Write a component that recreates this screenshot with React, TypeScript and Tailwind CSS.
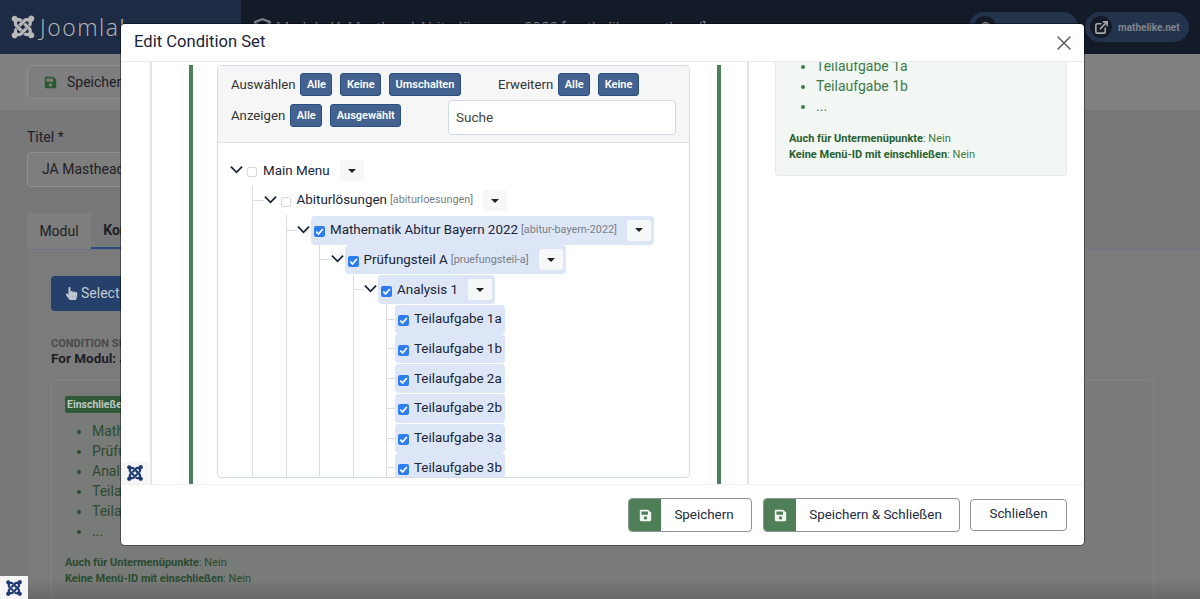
import type { ReactNode } from 'react'
import { FaJoomla, FaSave, FaHandPointer, FaShieldAlt, FaCube } from 'react-icons/fa'
import { LuX, LuExternalLink } from 'react-icons/lu'

function ChevronDown() {
  return (
    <svg viewBox="0 0 14 9" className="w-[13px] h-[9px] shrink-0" fill="none" stroke="#1a2438" strokeWidth="2">
      <path d="M1 1.5 L7 7.5 L13 1.5" />
    </svg>
  )
}

function Caret() {
  return <span className="w-0 h-0 border-x-[4.5px] border-x-transparent border-t-[4.5px] border-t-[#222]" />
}

function Check({ on }: { on: boolean }) {
  if (!on) {
    return <span className="w-[10px] h-[10px] mt-[3px] shrink-0 rounded-[2px] border border-[#d5d8dc] bg-white" />
  }
  return (
    <span className="flex items-center justify-center w-[11px] h-[11px] mt-[3px] -mr-px shrink-0 rounded-[2px] bg-[#2d7cf0]">
      <svg viewBox="0 0 11 11" className="w-[11px] h-[11px]" fill="none" stroke="#fff" strokeWidth="1.8">
        <path d="M2.3 5.6 L4.6 8 L8.8 3" />
      </svg>
    </span>
  )
}

function SmallBtn({ label, className }: { label: string; className?: string }) {
  return (
    <button className={`h-[23px] px-[5.5px] rounded-[3px] border border-[#2a5082] bg-[#436290] text-white text-[11px] font-semibold leading-none ${className ?? ''}`}>
      {label}
    </button>
  )
}

interface RowProps {
  label: string
  alias?: string
  checked?: boolean
  depth: number
  hasCaret?: boolean
  leaf?: boolean
}

function TreeRow({ label, alias, checked = false, depth, hasCaret = true, leaf = false }: RowProps) {
  return (
    <div className="flex items-center h-[29.7px]">
      {depth > 0 && <span className={`h-px bg-[#ddd] shrink-0 ${leaf ? 'w-[8px]' : 'w-[10.5px]'}`} />}
      {!leaf && <span className="flex w-[14px] shrink-0 pb-[2px]"><ChevronDown /></span>}
      <div
        className={`flex items-center h-[29px] rounded-[4px] pl-[3px] pr-[3px] ${
          checked ? 'bg-[#dce6f7]' : ''
        }`}
      >
        <Check on={checked} />
        <span className="ml-[6px] text-[13.4px] text-[#1a2438] whitespace-nowrap">{label}</span>
        {alias && <span className="ml-[3px] text-[10.8px] text-[#7a7f85] whitespace-nowrap">[{alias}]</span>}
        {hasCaret && (
          <span className="flex items-center justify-center w-[24px] h-[21px] ml-[10px] rounded-[3px] bg-[#f6f7f8]">
            <Caret />
          </span>
        )}
      </div>
    </div>
  )
}

function Branch({ children, ml }: { children: ReactNode; ml: string }) {
  return <div className={`border-l border-[#ddd] ${ml}`}>{children}</div>
}

function GreenButton({ label, w }: { label: string; w: string }) {
  return (
    <button className={`flex items-stretch h-[34px] ${w} rounded-[4px] border border-[#8d9298] bg-white overflow-hidden`}>
      <span className="flex items-center justify-center w-[32px] shrink-0 bg-[#4f7f56] text-[#f2f5f2] text-[13px]">
        <FaSave />
      </span>
      <span className="flex-1 flex items-center justify-center pr-[4px] text-[13.4px] text-[#1f2a3c]">{label}</span>
    </button>
  )
}

// the page behind the dialog, already in its dimmed colours
function BackgroundPage() {
  return (
    <div className="h-[599px] overflow-hidden bg-[#77787a] text-[#1d2026]">
      <header className="flex h-[54px] bg-[#131a28]">
        <div className="flex items-center w-[241px] pl-[10px] gap-[4px] bg-[#1d2b45] text-[#b8b8b8]">
          <FaJoomla className="text-[26px]" />
          <span className="text-[23px] tracking-[1.5px] font-extralight font-['Open_Sans',sans-serif]">Joomla!</span>
        </div>
        <div className="flex flex-1 items-start pt-[17px] pl-[13px] gap-[5px] text-[#7d828c] text-[15.1px]">
          <FaCube className="mt-[1px] text-[17px]" />
          <span className="whitespace-nowrap">Modul: JA Masthead Abiturlösungen 2022 [mathelike-masthead]</span>
        </div>
        <div className="flex items-start pt-[12px] pr-[11px] gap-[7px]">
          <div className="flex items-center w-[109px] h-[30px] rounded-full bg-[#24334c] pl-[5px]">
            <span className="flex items-center justify-center w-[22px] h-[22px] rounded-full bg-[#131a28] text-[#999] text-[11px]">
              <FaShieldAlt />
            </span>
          </div>
          <div className="flex items-center w-[104px] h-[30px] rounded-full bg-[#24334c] pl-[5px] gap-[6px]">
            <span className="flex items-center justify-center w-[22px] h-[22px] rounded-full bg-[#131a28] text-[#aaa] text-[15px]">
              <LuExternalLink strokeWidth={2.5} />
            </span>
            <span className="text-[10px] font-bold text-[#80858f]">mathelike.net</span>
          </div>
        </div>
      </header>
      <div className="flex h-[56px] items-start pt-[11px] pl-[27px] bg-[#818181]">
        <div className="flex items-center h-[34px] w-[200px] pl-[16px] gap-[10px] rounded-[4px] border border-[#8c8f94] text-[14px] bg-[#7e7e7e]">
          <FaSave className="text-[#2a5a30] text-[13px]" />
          <span>Speichern</span>
        </div>
      </div>
      <div className="pl-[27px] pt-[19px]">
        <p className="text-[14px] leading-[16px]">Titel *</p>
        <div className="flex items-center mt-[7px] w-[400px] h-[35px] pl-[14px] rounded-[4px] border border-[#8c8f94] bg-[#7e7e7e] text-[14px]">
          JA Masthead Abiturlösungen 2022
        </div>
        <div className="flex mt-[26px] h-[37px] text-[14px] border-b border-[#6d7585]">
          <div className="flex items-center justify-center w-[64px] bg-[#7e7e7e]">Modul</div>
          <div className="flex items-center justify-center w-[100px] font-bold border-b-[2px] border-[#2a4a82]">Konditionen</div>
        </div>
        <div className="bg-[#7b7b7b] h-[400px] pl-[24px] pr-[46px] pt-[26px]">
          <button className="flex items-center gap-[3px] h-[35px] w-[200px] pl-[14px] rounded-[4px] bg-[#24406b] text-[#c4c8d0] text-[14px]">
            <FaHandPointer className="text-[13px]" />
            Select Condition Set
          </button>
          <p className="mt-[26px] text-[11px] leading-[14px] font-bold text-[#4a4a4a]">CONDITION SET</p>
          <p className="-mt-px text-[13.5px] font-bold leading-[16px]">For Modul: JA Masthead</p>
          <div className="mt-[14px] p-[13px] pt-[15px] rounded-[4px] border border-[#828582] bg-[#787b78] text-[#2b4a30]">
            <span className="block w-fit h-[17px] px-[2px] rounded-[2px] bg-[#2f5a38] text-[#c0c8c0] text-[10.5px] font-bold leading-[17px]">
              Einschließen
            </span>
            <ul className="mt-[8px] pl-[27px] list-disc text-[14px] leading-[20px]">
              <li>Mathematik Abitur Bayern 2022</li>
              <li>Prüfungsteil A</li>
              <li>Analysis 1</li>
              <li>Teilaufgabe 1a</li>
              <li>Teilaufgabe 1b</li>
              <li>...</li>
            </ul>
            <p className="mt-[14px] text-[11px] leading-[16px]"><b>Auch für Untermenüpunkte</b>: Nein</p>
            <p className="text-[11px] leading-[16px]"><b>Keine Menü-ID mit einschließen</b>: Nein</p>
          </div>
        </div>
      </div>
    </div>
  )
}

export default function App() {
  return (
    <div className="relative w-[1200px] h-[599px] overflow-hidden font-['Roboto',sans-serif]">
      <BackgroundPage />
      <div className="absolute bottom-0 left-0 right-0 h-[20px] bg-gradient-to-b from-transparent to-black/15" />
      <div className="absolute bottom-0 left-0 flex items-center justify-center w-[28px] h-[23px] bg-[#f5f5f5] text-[#1c3a70] text-[18px]">
        <FaJoomla />
      </div>

      <div className="absolute left-[121px] top-[24px] flex flex-col w-[963px] h-[521px] rounded-[4px] bg-white overflow-hidden shadow-[0_0_0_1px_rgba(0,0,0,0.4)]">
        <div className="flex items-center justify-between h-[38px] shrink-0 pl-[13px] pr-[8px] border-b border-[#e4e9f2]">
          <h2 className="text-[16.6px] text-[#1a2438]">Edit Condition Set</h2>
          <LuX className="text-[#555] text-[24px]" strokeWidth={1.4} />
        </div>

        <div className="relative flex flex-1 min-h-0 overflow-hidden pl-[29px]">
          <div className="w-[599px] shrink-0 pl-[37px] pr-[26px] border-x-[2px] border-[#dfe6f3]">
            <div className="h-full px-[24px] border-x-[4px] border-[#4f7f56]">
              <div className="mt-[3px] w-[473px] h-[413px] rounded-[4px] border border-[#d3dcea] overflow-hidden">
                <div className="h-[77px] px-[13px] pt-[7px] bg-[#f6f6f7] border-b border-[#d9e1ef]">
                  <div className="flex items-center">
                    <span className="text-[13.2px] text-[#333]">Auswählen</span>
                    <SmallBtn label="Alle" className="ml-[5px]" />
                    <SmallBtn label="Keine" className="ml-[8px]" />
                    <SmallBtn label="Umschalten" className="ml-[8px]" />
                    <span className="ml-[37px] text-[13.2px] text-[#333]">Erweitern</span>
                    <SmallBtn label="Alle" className="ml-[5px]" />
                    <SmallBtn label="Keine" className="ml-[8px]" />
                  </div>
                  <div className="flex items-start mt-[4px]">
                    <div className="flex items-center mt-[4px]">
                      <span className="text-[13.2px] text-[#333]">Anzeigen</span>
                      <SmallBtn label="Alle" className="ml-[5px]" />
                      <SmallBtn label="Ausgewählt" className="ml-[8px]" />
                    </div>
                    <div className="flex items-center ml-auto w-[228px] h-[35px] pl-[7px] rounded-[4px] border border-[#ced9e8] bg-white text-[13.5px] text-[#444]">
                      Suche
                    </div>
                  </div>
                </div>

                <div className="pl-[12px] pt-[13px]">
                  <TreeRow depth={0} label="Main Menu" />
                  <Branch ml="ml-[22px]">
                    <TreeRow depth={1} label="Abiturlösungen" alias="abiturloesungen" />
                    <Branch ml="ml-[32.5px]">
                      <TreeRow depth={2} label="Mathematik Abitur Bayern 2022" alias="abitur-bayern-2022" checked />
                      <Branch ml="ml-[32.5px]">
                        <TreeRow depth={3} label="Prüfungsteil A" alias="pruefungsteil-a" checked />
                        <Branch ml="ml-[32.5px]">
                          <TreeRow depth={4} label="Analysis 1" checked />
                          <Branch ml="ml-[32.5px]">
                            <TreeRow depth={5} leaf hasCaret={false} label="Teilaufgabe 1a" checked />
                            <TreeRow depth={5} leaf hasCaret={false} label="Teilaufgabe 1b" checked />
                            <TreeRow depth={5} leaf hasCaret={false} label="Teilaufgabe 2a" checked />
                            <TreeRow depth={5} leaf hasCaret={false} label="Teilaufgabe 2b" checked />
                            <TreeRow depth={5} leaf hasCaret={false} label="Teilaufgabe 3a" checked />
                            <TreeRow depth={5} leaf hasCaret={false} label="Teilaufgabe 3b" checked />
                          </Branch>
                        </Branch>
                      </Branch>
                    </Branch>
                  </Branch>
                </div>
              </div>
            </div>
          </div>

          <div className="ml-[26px] w-[292px] h-[114px] rounded-b-[4px] border border-t-0 border-[#e6ebf2] bg-[#f3f7f3] text-[#3f7a46]">
            <ul className="-mt-[6px] pl-[40px] list-disc text-[14px] leading-[20px] marker:text-[#3f7a46]">
              <li>Teilaufgabe 1a</li>
              <li>Teilaufgabe 1b</li>
              <li>...</li>
            </ul>
            <p className="mt-[15px] pl-[13px] text-[11px] leading-[16px]"><b className="text-[#28602f]">Auch für Untermenüpunkte</b>: Nein</p>
            <p className="pl-[13px] text-[11px] leading-[16px]"><b className="text-[#28602f]">Keine Menü-ID mit einschließen</b>: Nein</p>
          </div>

          <div className="absolute left-0 bottom-0 flex items-center justify-center w-[28px] h-[22px] bg-[#f5f5f5] text-[#1c3a70] text-[18px]">
            <FaJoomla />
          </div>
        </div>

        <div className="flex items-center justify-end h-[61px] shrink-0 gap-[10px] pr-[17px] border-t border-[#f0f1f3]">
          <GreenButton label="Speichern" w="w-[124px] mr-px" />
          <GreenButton label="Speichern & Schließen" w="w-[197px]" />
          <button className="w-[97px] h-[32px] pb-[2px] rounded-[4px] border border-[#8d9298] text-[13.3px] text-[#1f2a3c]">Schließen</button>
        </div>
      </div>
    </div>
  )
}
